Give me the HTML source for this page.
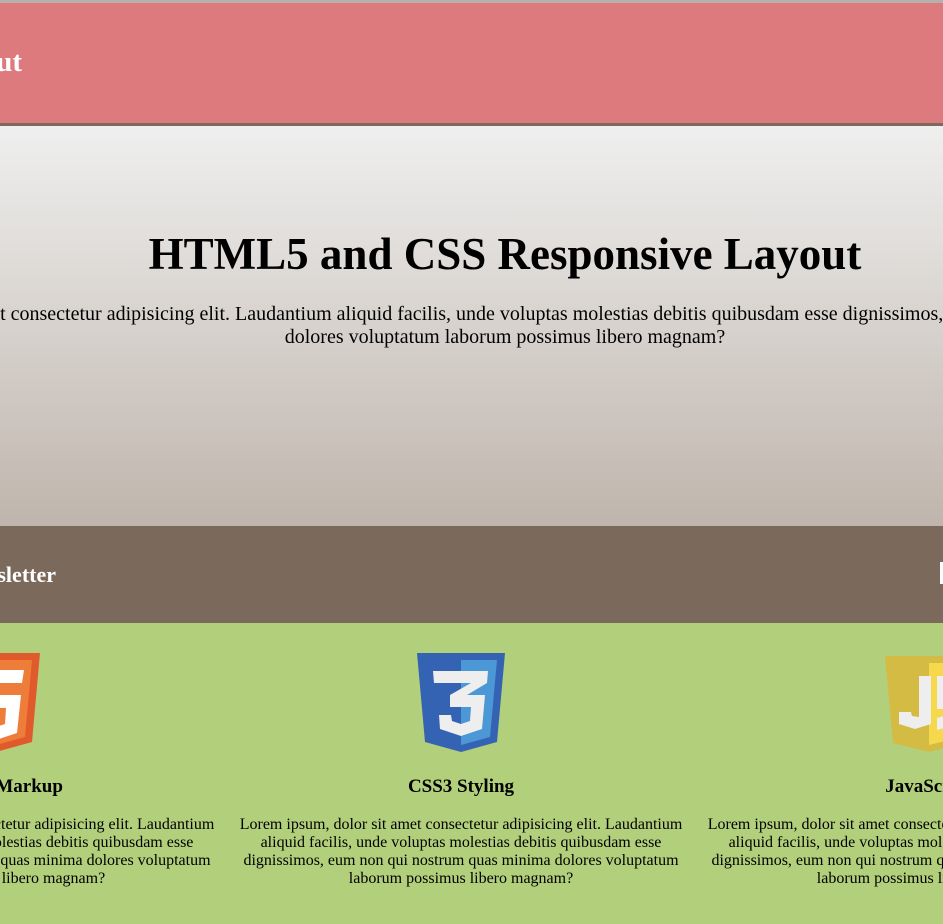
<!DOCTYPE html>
<html><head><meta charset="utf-8"><style>
*{margin:0;padding:0;box-sizing:border-box}
html,body{width:943px;height:924px;overflow:hidden;background:#b2cf7c;font-family:"Liberation Serif",serif;position:relative}
.top{position:absolute;left:0;top:0;width:943px;height:3px;background:#b5b0ac}
.hdr{position:absolute;left:0;top:3px;width:943px;height:120px;background:#dc7a7e;border-bottom:3px solid #7b6a5c;box-sizing:content-box;overflow:hidden}
.hdr span{position:absolute;right:921px;top:43px;color:#fff;font-weight:bold;font-size:29px;white-space:nowrap}
.hero{position:absolute;left:0;top:126px;width:943px;height:400px;background:linear-gradient(#efefef,#bfb5ac);overflow:hidden}
.hero h1{position:absolute;left:5px;width:1000px;top:102px;text-align:center;font-size:45px;font-weight:bold;white-space:nowrap}
.hero p{position:absolute;left:-295px;width:1600px;top:177px;text-align:center;font-size:20px;line-height:23px;white-space:nowrap}
.nl{position:absolute;left:0;top:526px;width:943px;height:97px;background:#7b6a5c;overflow:hidden}
.nl span{position:absolute;right:887px;top:36px;color:#fff;font-weight:bold;font-size:22px;white-space:nowrap}
.nl i{position:absolute;left:940px;top:36px;width:3px;height:22px;background:#fff}
.col{position:absolute;top:623px;width:470px;text-align:center}
.col h3{position:absolute;left:0;width:100%;top:153px;font-size:19px;font-weight:bold;white-space:nowrap}
.col p{position:absolute;left:0;width:100%;top:193px;font-size:16px;line-height:18px;white-space:nowrap}
.col svg{position:absolute;top:30px}
.wrap{position:absolute;left:0;top:0;width:943px;height:924px;overflow:hidden}
</style></head><body>
<div class="wrap">
<div class="top"></div>
<div class="hdr"><span>HTML5 and CSS Responsive Layout</span></div>
<div class="hero">
<h1>HTML5 and CSS Responsive Layout</h1>
<p>Lorem ipsum dolor sit amet consectetur adipisicing elit. Laudantium aliquid facilis, unde voluptas molestias debitis quibusdam esse dignissimos, eum non qui nostrum quas minima<br>dolores voluptatum laborum possimus libero magnam?</p>
</div>
<div class="nl"><span>Subscribe To Our Newsletter</span><i></i></div>

<div class="col" style="left:-242px">
<svg style="left:194px" width="88" height="100" viewBox="0 0 88 100"><path d="M0 0H88L80 89L44 99L8 89Z" fill="#e05a2b"/><path d="M44 7H80L73 84L44 92Z" fill="#ef7d3a"/><path d="M16 17H72L70 30H31L32 42H69L65 80L44 87L23 80L22 66H34L35 71L44 74L53 71L54 55H20Z" fill="#fff"/></svg>
<h3>HTML5 Markup</h3>
<p>Lorem ipsum, dolor sit amet consectetur adipisicing elit. Laudantium<br>aliquid facilis, unde voluptas molestias debitis quibusdam esse<br>dignissimos, eum non qui nostrum quas minima dolores voluptatum<br>laborum possimus libero magnam?</p>
</div>

<div class="col" style="left:226px">
<svg style="left:191px" width="88" height="100" viewBox="0 0 88 100"><path d="M0 0H88L80 89L44 99L8 89Z" fill="#3563b3"/><path d="M44 7H80L73 84L44 92Z" fill="#4c97d5"/><path d="M16 18H71L70 30L50 42H68L65 76L44 83L23 76L22 62H34L35 68L44 71L53 68L54 54H33L33 42L54 30H17Z" fill="#eee"/></svg>
<h3>CSS3 Styling</h3>
<p>Lorem ipsum, dolor sit amet consectetur adipisicing elit. Laudantium<br>aliquid facilis, unde voluptas molestias debitis quibusdam esse<br>dignissimos, eum non qui nostrum quas minima dolores voluptatum<br>laborum possimus libero magnam?</p>
</div>

<div class="col" style="left:694px">
<svg style="left:191px;top:33px" width="88" height="96" viewBox="0 0 88 96"><path d="M0 0H88L80 87L44 96L8 87Z" fill="#d4bb44"/><path d="M44 7H80L73 82L44 89Z" fill="#f5d84c"/><path d="M34 20H46V68L30 73L14 68V56H26L27 60L34 61Z" fill="#eee"/><path d="M52 20H76L75 32H58L58 42H74L72 68L52 74V62L62 59V53H52Z" fill="#eee"/></svg>
<h3>JavaScript</h3>
<p>Lorem ipsum, dolor sit amet consectetur adipisicing elit. Laudantium<br>aliquid facilis, unde voluptas molestias debitis quibusdam esse<br>dignissimos, eum non qui nostrum quas minima dolores voluptatum<br>laborum possimus libero magnam?</p>
</div>
</div>
</body></html>
